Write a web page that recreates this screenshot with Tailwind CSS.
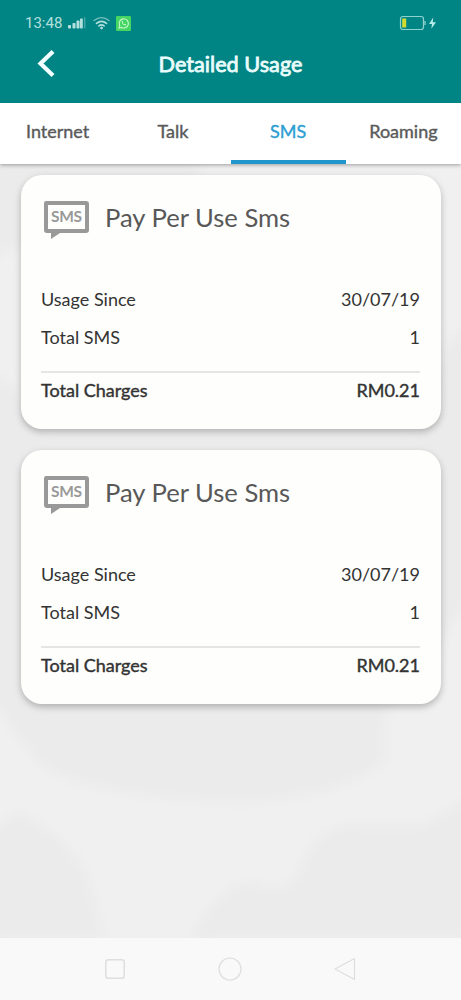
<!DOCTYPE html>
<html lang="en">
<head>
<meta charset="utf-8">
<meta name="viewport" content="width=device-width, initial-scale=1">
<title>Detailed Usage</title>
<script src="https://cdn.jsdelivr.net/npm/@tailwindcss/browser@4"></script>
</head>
<body class="bg-[#efefef]">
<div class="relative isolate flex h-[1000px] w-[461px] flex-col overflow-hidden font-['Lato',sans-serif]">
  <!-- Soft backdrop -->
  <svg class="absolute inset-0 -z-10" width="461" height="1000" viewBox="0 0 461 1000">
    <defs><filter id="soft" x="-10%" y="-10%" width="120%" height="120%"><feGaussianBlur stdDeviation="6"/></filter></defs>
    <rect width="461" height="1000" fill="#f0f0f0"/>
    <g filter="url(#soft)" fill="#ebebeb">
      <path d="M-10 150H200V250H0L-10 270Z"/>
      <path d="M-10 372Q20 380 40 430H420Q430 350 471 320V600L385 715V762Q330 800 240 802Q90 798 40 765L-10 700Z"/>
      <path d="M-10 835L15 812Q60 830 85 870L105 940H-10Z"/>
      <path d="M190 940Q220 880 255 882Q285 898 300 870Q310 830 350 825H425L471 795V940Z"/>
    </g>
  </svg>

  <header class="relative z-10 h-[103px] shrink-0 bg-[#008484]">
    <div class="flex h-[46px] items-center justify-between pr-[23px] pl-[25px]">
      <div class="flex items-center text-[#b4e0de]">
        <span class="w-[38px] font-['Roboto',sans-serif] text-[15px] whitespace-nowrap">13:48</span>
        <svg class="ml-[5px]" width="19" height="14" viewBox="0 0 19 14" fill="currentColor">
          <rect y="9" width="3" height="3.5" rx=".8"/><rect x="4.5" y="7" width="3" height="5.500" rx=".8"/><rect x="8.500" y="4.500" width="3" height="8" rx=".8"/><rect x="12" y="2.500" width="2.800" height="10" rx=".8"/><rect x="16" y="1" width="1.500" height="11.500" rx=".7" opacity=".35"/>
        </svg>
        <svg class="ml-[6px]" width="17" height="14" viewBox="0 0 17 14" fill="none" stroke="currentColor" stroke-linecap="round">
          <path d="M1 4.600Q8.500-1.400 16 4.600" stroke-width="1.300" opacity=".65"/><path d="M3.500 7.400Q8.500 3.300 13.500 7.400" stroke-width="1.700"/><path d="M5.900 9.900Q8.500 7.900 11.100 9.900" stroke-width="1.600"/><circle cx="8.500" cy="12" r=".9" fill="currentColor"/>
        </svg>
        <svg class="ml-[6px]" width="15" height="15" viewBox="0 0 15 15" fill="none">
          <rect width="15" height="15" rx="1" fill="#44d562"/>
          <path d="M3 12L3.700 9.500A4.600 4.600 0 1 1 5.500 11.400Z" stroke="#c9f7ce" stroke-width="1.100"/>
          <path d="M5.700 5.200Q5.700 8.900 9.700 9.500L10 8.300L8.800 7.700L8.200 8.300Q7.100 7.700 6.800 6.700L7.200 6L6.600 4.900Z" fill="#c9f7ce"/>
        </svg>
      </div>
      <svg width="39" height="16" viewBox="0 0 39 16" fill="none">
        <rect x="1.500" y="1.500" width="23" height="13" rx="2.500" stroke="#8fd2cf" stroke-width="1.200"/>
        <path d="M26 6V10" stroke="#8fd2cf" stroke-width="1.300"/>
        <rect x="3.200" y="3.500" width="4" height="9" fill="#d3dc2e"/>
        <path d="M34.200 2.600L30 9H33L32.300 13.800L37 7.300H33.800Z" fill="#b5eceb"/>
      </svg>
    </div>
    <div class="grid h-[36px] grid-cols-[60px_1fr_60px] items-center">
      <svg class="ml-[36px] -mt-[3px]" width="20" height="30" viewBox="0 0 20 30" fill="none" stroke="#f4ffff" stroke-width="4.200"><path d="M17 3.500L4.500 15.500L17 27.500"/></svg>
      <h1 class="text-center text-[21.700px] leading-[36px] font-normal whitespace-nowrap text-[#eafcfc] [-webkit-text-stroke:0.8px_#eafcfc]">Detailed Usage</h1>
    </div>
  </header>

  <nav class="grid h-[61px] shrink-0 grid-cols-4 bg-white text-center text-[18px] leading-[57px] text-[#5a5a5a] shadow-[0_1px_4px_rgba(0,0,0,0.35)] [-webkit-text-stroke:0.4px_currentColor]">
    <div>Internet</div>
    <div>Talk</div>
    <div class="border-b-[4px] border-[#2196cd] text-[#2e9ed3]">SMS</div>
    <div>Roaming</div>
  </nav>

  <main class="flex flex-1 flex-col gap-[21px] px-[20.5px] pt-[11px]">
    <section class="h-[254px] rounded-[21px] bg-[#fefefc] px-[20.500px] shadow-[0_3px_7px_rgba(0,0,0,0.25)]">
      <div class="flex h-[86px] items-center gap-[16px] pl-[2px]">
        <svg class="mt-[4px] shrink-0" width="46" height="40" viewBox="0 0 46 40">
          <path fill="#999" fill-rule="evenodd" d="M3 1H43Q46 1 46 4V30Q46 33 43 33H17L8 39V33H4Q1 33 1 30V4Q1 1 3 1ZM5 5V29H42V5Z"/>
          <text x="23.500" y="22" text-anchor="middle" textLength="31" font-family="Lato" font-weight="700" font-size="15.500" fill="#999">SMS</text>
        </svg>
        <h2 class="-mt-[2px] text-[25.600px] whitespace-nowrap text-[#585858]">Pay Per Use Sms</h2>
      </div>
      <dl class="mt-[20px] text-[18px] leading-[37.500px] text-[#333]">
        <div class="flex justify-between"><dt>Usage Since</dt><dd>30/07/19</dd></div>
        <div class="flex justify-between"><dt>Total SMS</dt><dd>1</dd></div>
        <div class="mt-[15px] flex justify-between border-t-2 border-[#e4e6e4] leading-[35.500px] [-webkit-text-stroke:0.4px_#333]"><dt>Total Charges</dt><dd>RM0.21</dd></div>
      </dl>
    </section>
    <section class="h-[254px] rounded-[21px] bg-[#fefefc] px-[20.500px] shadow-[0_3px_7px_rgba(0,0,0,0.25)]">
      <div class="flex h-[86px] items-center gap-[16px] pl-[2px]">
        <svg class="mt-[4px] shrink-0" width="46" height="40" viewBox="0 0 46 40">
          <path fill="#999" fill-rule="evenodd" d="M3 1H43Q46 1 46 4V30Q46 33 43 33H17L8 39V33H4Q1 33 1 30V4Q1 1 3 1ZM5 5V29H42V5Z"/>
          <text x="23.500" y="22" text-anchor="middle" textLength="31" font-family="Lato" font-weight="700" font-size="15.500" fill="#999">SMS</text>
        </svg>
        <h2 class="-mt-[2px] text-[25.600px] whitespace-nowrap text-[#585858]">Pay Per Use Sms</h2>
      </div>
      <dl class="mt-[20px] text-[18px] leading-[37.500px] text-[#333]">
        <div class="flex justify-between"><dt>Usage Since</dt><dd>30/07/19</dd></div>
        <div class="flex justify-between"><dt>Total SMS</dt><dd>1</dd></div>
        <div class="mt-[15px] flex justify-between border-t-2 border-[#e4e6e4] leading-[35.500px] [-webkit-text-stroke:0.4px_#333]"><dt>Total Charges</dt><dd>RM0.21</dd></div>
      </dl>
    </section>
  </main>

  <footer class="flex h-[62px] shrink-0 items-center justify-center gap-[91px] bg-[#f9f9f9] pr-[1px] text-[#dedede]">
    <svg width="24" height="24" viewBox="0 0 24 24" fill="none" stroke="currentColor" stroke-width="1.500"><rect x="2.800" y="2.800" width="18.400" height="18.400" rx="2.500"/></svg>
    <svg width="24" height="24" viewBox="0 0 24 24" fill="none" stroke="currentColor" stroke-width="1.200"><circle cx="12" cy="12" r="11"/></svg>
    <svg width="24" height="24" viewBox="0 0 24 24" fill="none" stroke="currentColor" stroke-width="1.200" stroke-linejoin="round"><path d="M21.500 1.500V22.500L2 12Z"/></svg>
  </footer>
</div>
</body>
</html>
